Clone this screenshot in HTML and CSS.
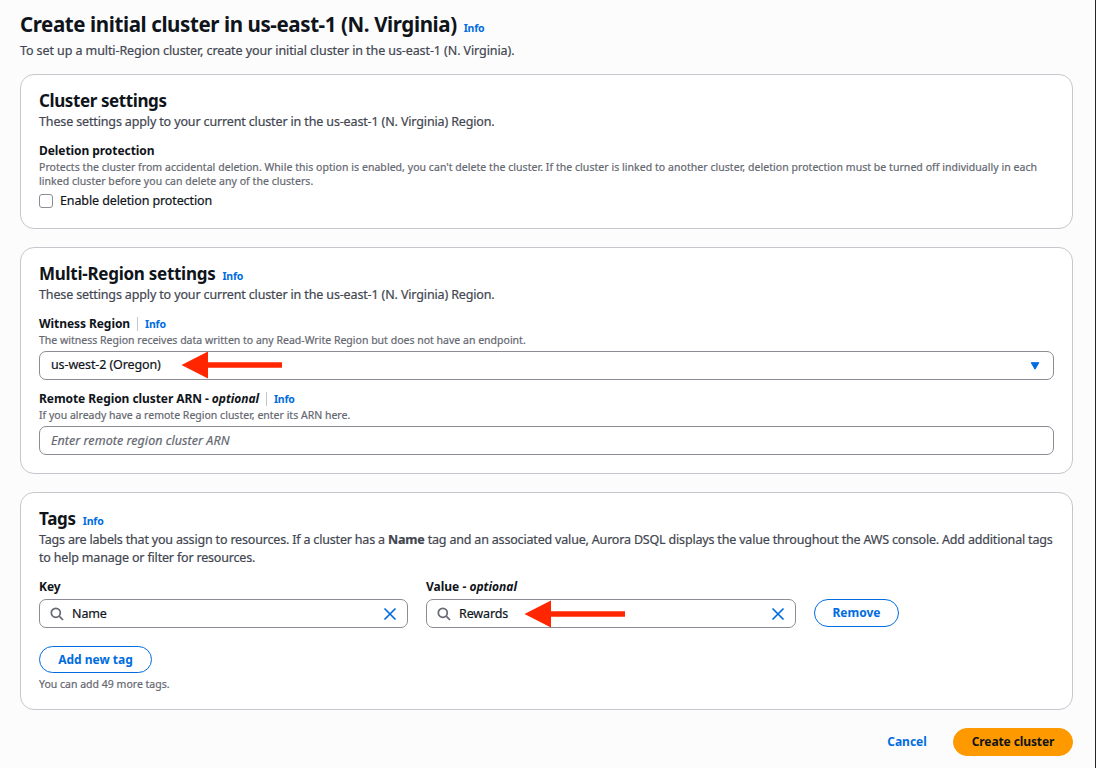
FILE: index.html
```html
<!DOCTYPE html>
<html lang="en">
<head>
<meta charset="utf-8">
<title>Create cluster</title>
<link rel="stylesheet" href="styles.css">
</head>
<body>
<main class="page">
  <header class="page-header">
    <div class="heading-row"><h1 class="page-title">Create initial cluster in us-east-1 (N. Virginia)</h1><a class="info">Info</a></div>
    <p class="description page-description">To set up a multi-Region cluster, create your initial cluster in the us-east-1 (N. Virginia).</p>
  </header>

  <section class="card card-cluster">
    <h2 class="card-title title-cluster">Cluster settings</h2>
    <p class="description">These settings apply to your current cluster in the us-east-1 (N. Virginia) Region.</p>
    <div class="field">
      <div class="label">Deletion protection</div>
      <p class="hint hint-long">Protects the cluster from accidental deletion. While this option is enabled, you can't delete the cluster. If the cluster is linked to another cluster, deletion protection must be turned off individually in each<br>linked cluster before you can delete any of the clusters.</p>
      <label class="check"><span class="checkbox"></span><span class="check-text">Enable deletion protection</span></label>
    </div>
  </section>

  <section class="card card-region">
    <div class="heading-row"><h2 class="card-title title-region">Multi-Region settings</h2><a class="info">Info</a></div>
    <p class="description">These settings apply to your current cluster in the us-east-1 (N. Virginia) Region.</p>
    <div class="field">
      <div class="label-row"><span class="label">Witness Region</span><a class="info info-divided">Info</a></div>
      <p class="hint">The witness Region receives data written to any Read-Write Region but does not have an endpoint.</p>
      <div class="control control-select">
        <span class="value">us-west-2 (Oregon)</span>
        <svg class="caret" viewBox="0 0 10 8"><path d="M1.2 .7h7.6L5 7.2z" fill="#006ce0" stroke="#006ce0" stroke-linejoin="round"/></svg>
        <svg class="arrow arrow-region" viewBox="0 0 102 28"><path d="M.5 14 27 .5v10.7h74v5.6H27v10.7z" fill="#ff2600"/></svg>
      </div>
    </div>
    <div class="field field-arn">
      <div class="label-row"><span class="label">Remote Region cluster ARN - <i>optional</i></span><a class="info info-divided">Info</a></div>
      <p class="hint">If you already have a remote Region cluster, enter its ARN here.</p>
      <div class="control"><span class="placeholder">Enter remote region cluster ARN</span></div>
    </div>
  </section>

  <section class="card card-tags">
    <div class="heading-row"><h2 class="card-title title-tags">Tags</h2><a class="info">Info</a></div>
    <p class="description description-tags">Tags are labels that you assign to resources. If a cluster has a <b>Name</b> tag and an associated value, Aurora DSQL displays the value throughout the AWS console. Add additional tags<br>to help manage or filter for resources.</p>
    <div class="tag-row">
      <div class="tag-field tag-key">
        <div class="label">Key</div>
        <div class="control control-search">
          <svg class="search" viewBox="0 0 14 14"><circle cx="5.8" cy="5.8" r="4.5"/><path d="m9.2 9.2 3.8 3.8"/></svg>
          <span class="value">Name</span>
          <svg class="clear" viewBox="0 0 14 14"><path d="m1.5 1.5 11 11m0-11-11 11"/></svg>
        </div>
      </div>
      <div class="tag-field tag-value">
        <div class="label label-value">Value - <i>optional</i></div>
        <div class="control control-search">
          <svg class="search" viewBox="0 0 14 14"><circle cx="5.8" cy="5.8" r="4.5"/><path d="m9.2 9.2 3.8 3.8"/></svg>
          <span class="value">Rewards</span>
          <svg class="clear" viewBox="0 0 14 14"><path d="m1.5 1.5 11 11m0-11-11 11"/></svg>
          <svg class="arrow arrow-value" viewBox="0 0 102 28"><path d="M.5 14 27 .5v10.7h74v5.6H27v10.7z" fill="#ff2600"/></svg>
        </div>
      </div>
      <button class="button button-remove">Remove</button>
    </div>
    <button class="button button-add">Add new tag</button>
    <p class="hint hint-count">You can add 49 more tags.</p>
  </section>

  <footer class="actions">
    <button class="button button-link">Cancel</button>
    <button class="button button-primary">Create cluster</button>
  </footer>
</main>
</body>
</html>
```
FILE: styles.css
```css
* { box-sizing: border-box; }
body {
  margin: 0;
  background: #fcfcfd;
  color: #0f141a;
  font-family: "Noto Sans", "Open Sans", sans-serif;
  font-size: 12.5px;
}
h1, h2, p { margin: 0; }
.page {
  height: 768px;
  padding: 11px 22px 0 20px;
  border-right: 1px solid #202a2d;
  overflow: hidden;
  white-space: nowrap;
}
.page-header { height: 63px; }
.heading-row { display: flex; align-items: baseline; gap: 7px; }
.page-title { font-size: 20.5px; line-height: 26px; letter-spacing: -0.4px; }
.info { color: #006ce0; font-size: 10.5px; font-weight: 700; line-height: 16px; letter-spacing: -0.2px; }
.description {
  color: #424650;
  line-height: 18px;
  font-size: 12.5px;
  letter-spacing: -0.14px;
  -webkit-text-stroke: 0.2px;
}
.page-description { margin-top: 5px; letter-spacing: -0.09px; }
.description-tags { letter-spacing: -0.18px; }
.card {
  border: 1px solid #c6c6cd;
  border-radius: 14px;
  background: #fff;
  padding: 14px 18px 0;
  margin-bottom: 18px;
}
.card-cluster { height: 155px; }
.card-region { height: 227px; }
.card-tags { height: 218px; }
.card-title { font-size: 17px; line-height: 23px; letter-spacing: -0.27px; margin-bottom: 1px; }
.title-cluster { letter-spacing: -0.4px; }
.field { padding-top: 11px; }
.field-arn { padding-top: 10px; }
.label-row { display: flex; align-items: center; }
.label { font-weight: 700; font-size: 12px; line-height: 18px; letter-spacing: -0.07px; }
.label-value { letter-spacing: 0; }
.info-divided { border-left: 1px solid #c6c6cd; margin-left: 7px; padding-left: 7px; line-height: 14px; }
.hint { color: #656871; font-size: 10.5px; line-height: 14px; -webkit-text-stroke: 0.2px; letter-spacing: 0.01px; }
.hint-long { letter-spacing: 0.047px; }
.check { display: flex; align-items: center; gap: 7px; height: 25px; }
.check-text { letter-spacing: -0.11px; -webkit-text-stroke: 0.2px; }
.checkbox { width: 14px; height: 14px; border: 1px solid #8c8c94; border-radius: 3px; }
.control {
  position: relative;
  display: flex;
  align-items: center;
  height: 29px;
  margin-top: 4px;
  padding: 0 13px 0 11px;
  border: 1px solid #8c8c94;
  border-radius: 7px;
  background: #fff;
}
.value { flex: 1; letter-spacing: -0.11px; -webkit-text-stroke: 0.2px; }
.control-select .value { padding-bottom: 2px; }
.placeholder { color: #656871; font-style: italic; letter-spacing: 0.05px; -webkit-text-stroke: 0.2px; }
.caret { width: 10px; height: 8px; }
.arrow { position: absolute; width: 102px; height: 28px; }
.arrow-region { left: 141px; top: -1px; }
.arrow-value { left: 97px; top: 0; }
.tag-row { display: flex; align-items: flex-end; gap: 18px; padding-top: 11px; }
.tag-key { width: 369px; }
.tag-value { width: 370px; }
.control-search { padding: 0 10px; margin-top: 3px; }
.search { width: 14px; height: 14px; margin-right: 8px; fill: none; stroke: #656871; stroke-width: 1.7; }
.clear { width: 14px; height: 14px; fill: none; stroke: #006ce0; stroke-width: 1.7; }
.button {
  display: block;
  height: 28px;
  padding: 0;
  border: 1.5px solid #006ce0;
  border-radius: 14px;
  background: #fff;
  color: #006ce0;
  font: 700 12px/24px "Noto Sans", "Open Sans", sans-serif;
  white-space: nowrap;
}
.button-remove { width: 85px; margin-bottom: 1px; }
.button-add { width: 113px; height: 27px; margin: 18px 0 4px; }
.actions { display: flex; justify-content: flex-end; }
.button-link { width: 78px; margin-right: 7px; border-color: transparent; background: transparent; }
.button-primary { width: 120px; border-color: #ff9900; background: #ff9900; color: #0f141a; letter-spacing: -0.1px; }
```
